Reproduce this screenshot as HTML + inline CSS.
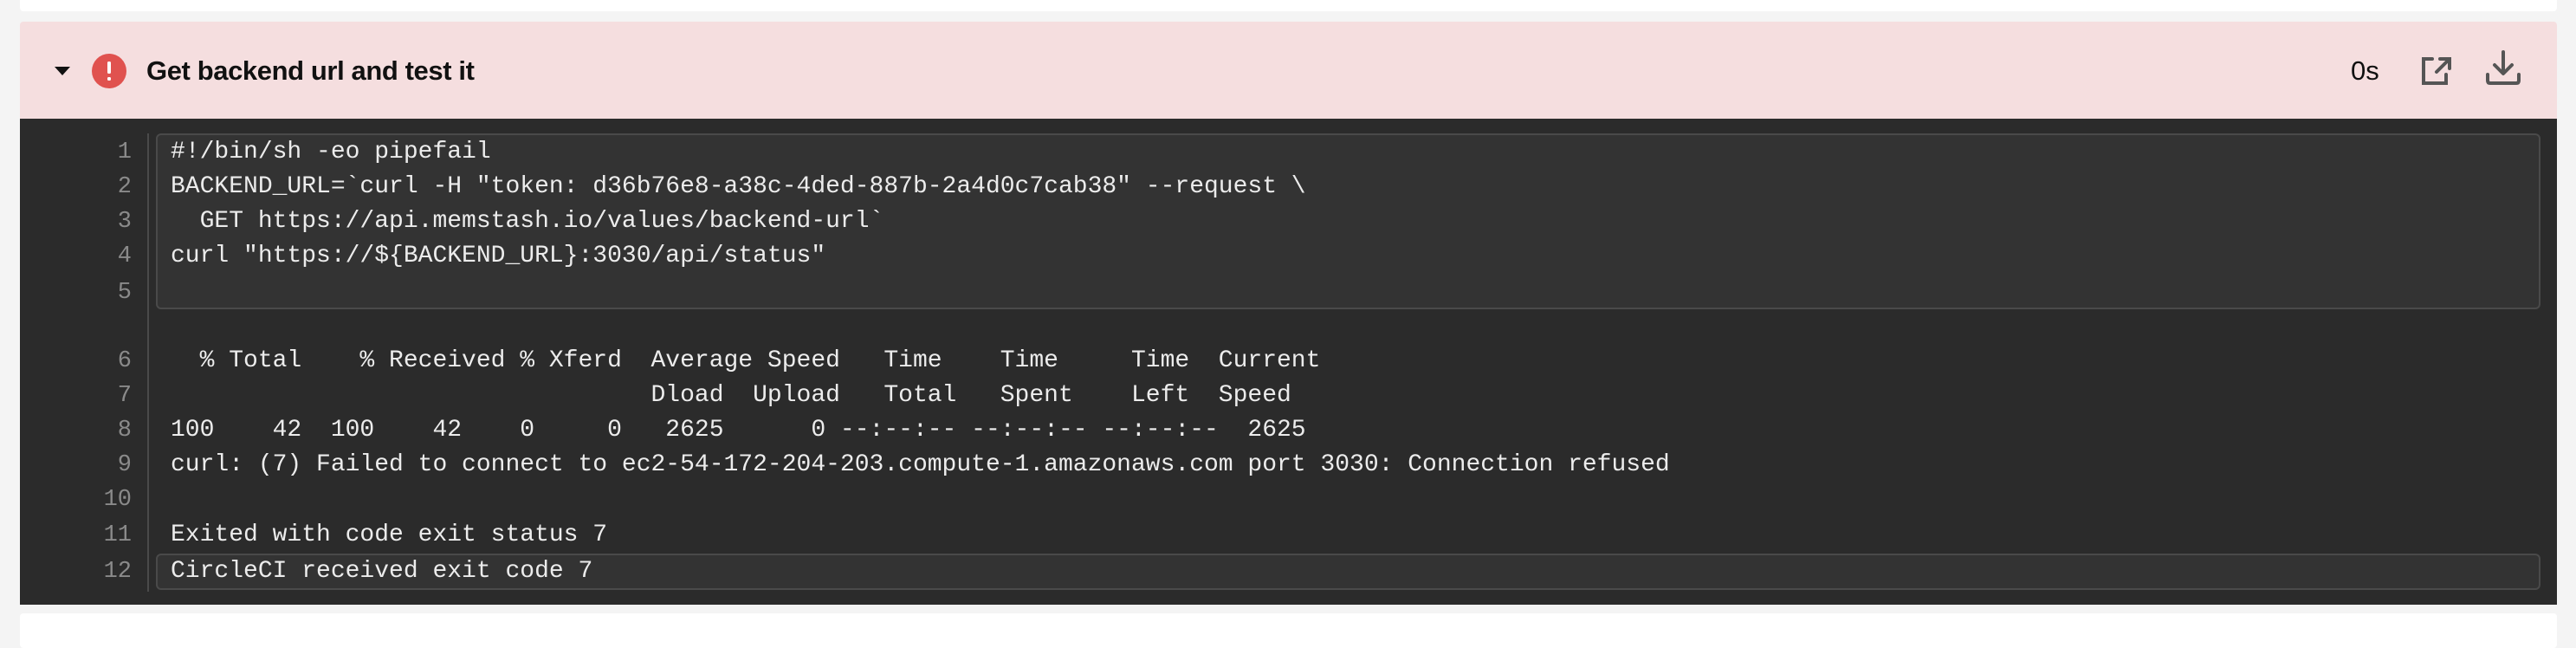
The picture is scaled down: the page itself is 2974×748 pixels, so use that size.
<!DOCTYPE html>
<html><head><meta charset="utf-8"><style>
body{margin:0;width:2974px;height:724px;background:#f4f4f4;position:relative;overflow:hidden;font-family:"Liberation Sans",sans-serif}
.card{position:absolute;left:23px;width:2929px;background:#fff;border-radius:4px}
.hdr{position:absolute;left:23px;top:25px;width:2929px;height:112px;background:#f5dedf;border-radius:4px 4px 0 0}
.dark{position:absolute;left:23px;top:137px;width:2929px;height:561px;background:#2b2b2b}
.box{position:absolute;left:180px;width:2753px;background:#333;border:2px solid #4a4a4a;border-radius:6px;box-sizing:border-box}
.gut{position:absolute;left:170px;width:2px;background:#4a4a4a}
.ln{position:absolute;left:60px;width:92px;text-align:right;font-family:"Liberation Mono",monospace;font-size:27px;color:#8a8a8a;height:40px;line-height:40px}
.tx{position:absolute;left:197px;font-family:"Liberation Mono",monospace;font-size:28px;color:#ececec;white-space:pre;height:40px;line-height:40px}
</style></head><body>
<div class="card" style="top:-10px;height:23px"></div>
<div class="card" style="top:708px;height:40px"></div>
<div class="hdr"></div>
<svg style="position:absolute;left:62px;top:75px" width="20" height="14"><path d="M1 2 L19 2 L10 12 Z" fill="#111"/></svg>
<svg style="position:absolute;left:106px;top:62px" width="40" height="40"><circle cx="20" cy="20" r="20" fill="#e0524f"/><rect x="18" y="9" width="4" height="14" rx="1.5" fill="#fff"/><rect x="18" y="27" width="4" height="4" rx="1.5" fill="#fff"/></svg>
<div style="position:absolute;left:169px;top:62px;font-size:31px;font-weight:bold;color:#111;letter-spacing:-0.4px;line-height:40px">Get backend url and test it</div>
<div style="position:absolute;left:2714px;top:62px;font-size:31px;color:#111;line-height:40px">0s</div>
<svg style="position:absolute;left:2794px;top:62px" width="40" height="40" fill="none" stroke="#555" stroke-width="4" stroke-linecap="round"><path d="M14 6 H4 V34 H30 V24"/><path d="M19 21 L33 7"/><path d="M23 6 H34 V17"/></svg>
<svg style="position:absolute;left:2868px;top:56px" width="44" height="44" fill="none" stroke="#555" stroke-width="4" stroke-linecap="round" stroke-linejoin="round"><path d="M22 4 V28"/><path d="M12 19 L22 29 L32 19"/><path d="M4 30 V37 Q4 40 7 40 H37 Q40 40 40 37 V30"/></svg>
<div class="dark"></div>
<div class="box" style="top:154px;height:203px"></div>
<div class="box" style="top:639px;height:42px"></div>
<div class="gut" style="top:154px;height:529px"></div>
<div class="ln" style="top:156px">1</div><div class="tx" style="top:156px">#!/bin/sh -eo pipefail</div>
<div class="ln" style="top:196px">2</div><div class="tx" style="top:196px">BACKEND_URL=`curl -H "token: d36b76e8-a38c-4ded-887b-2a4d0c7cab38" --request \</div>
<div class="ln" style="top:236px">3</div><div class="tx" style="top:236px">  GET https://api.memstash.io/values/backend-url`</div>
<div class="ln" style="top:276px">4</div><div class="tx" style="top:276px">curl "https://${BACKEND_URL}:3030/api/status"</div>
<div class="ln" style="top:318px">5</div>
<div class="ln" style="top:397px">6</div><div class="tx" style="top:397px">  % Total    % Received % Xferd  Average Speed   Time    Time     Time  Current</div>
<div class="ln" style="top:437px">7</div><div class="tx" style="top:437px">                                 Dload  Upload   Total   Spent    Left  Speed</div>
<div class="ln" style="top:477px">8</div><div class="tx" style="top:477px">100    42  100    42    0     0   2625      0 --:--:-- --:--:-- --:--:--  2625</div>
<div class="ln" style="top:517px">9</div><div class="tx" style="top:517px">curl: (7) Failed to connect to ec2-54-172-204-203.compute-1.amazonaws.com port 3030: Connection refused</div>
<div class="ln" style="top:557px">10</div>
<div class="ln" style="top:598px">11</div><div class="tx" style="top:598px">Exited with code exit status 7</div>
<div class="ln" style="top:640px">12</div><div class="tx" style="top:640px">CircleCI received exit code 7</div>
</body></html>
